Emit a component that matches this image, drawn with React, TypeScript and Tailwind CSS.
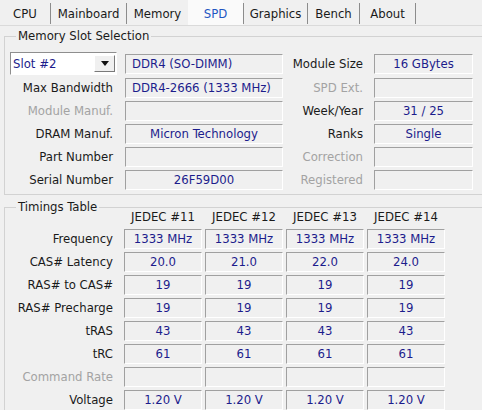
import React from 'react';

const field =
  'h-[20px] leading-[18px] border border-t-[#a0a0a0] border-l-[#a0a0a0] border-r-white border-b-white bg-[#f0f0f0] text-[#1c1c8c] whitespace-nowrap overflow-hidden';

function Field({ value = '', w, align = 'center' }: { value?: string; w: string; align?: 'left' | 'center' }) {
  return (
    <div className={`${field} ${w} ${align === 'left' ? 'text-left pl-[6px]' : 'text-center'}`}>{value}</div>
  );
}

function Label({ text, w, dim }: { text: string; w: string; dim?: boolean }) {
  return (
    <div className={`${w} text-right whitespace-nowrap leading-[20px] ${dim ? 'text-[#a3a3a3]' : 'text-[#1a1a1a]'}`}>{text}</div>
  );
}

const tabs = [
  { name: 'CPU', w: 'w-[50px]', sep: true },
  { name: 'Mainboard', w: 'w-[75px]', sep: true },
  { name: 'Memory', w: 'w-[61px]', sep: false },
  { name: 'SPD', w: 'w-[55px]', sep: true, active: true },
  { name: 'Graphics', w: 'w-[63px]', sep: true },
  { name: 'Bench', w: 'w-[51px]', sep: true },
  { name: 'About', w: 'w-[55px]', sep: true },
];

const slotRows = [
  { l: 'Max Bandwidth', v: 'DDR4-2666 (1333 MHz)', align: 'left' as const, r: 'SPD Ext.', rdim: true, rv: '' },
  { l: 'Module Manuf.', ldim: true, v: '', r: 'Week/Year', rv: '31 / 25' },
  { l: 'DRAM Manuf.', v: 'Micron Technology', r: 'Ranks', rv: 'Single' },
  { l: 'Part Number', v: '', r: 'Correction', rdim: true, rv: '' },
  { l: 'Serial Number', v: '26F59D00', r: 'Registered', rdim: true, rv: '' },
];

const timings = [
  { l: 'Frequency', v: ['1333 MHz', '1333 MHz', '1333 MHz', '1333 MHz'] },
  { l: 'CAS# Latency', v: ['20.0', '21.0', '22.0', '24.0'] },
  { l: 'RAS# to CAS#', v: ['19', '19', '19', '19'] },
  { l: 'RAS# Precharge', v: ['19', '19', '19', '19'] },
  { l: 'tRAS', v: ['43', '43', '43', '43'] },
  { l: 'tRC', v: ['61', '61', '61', '61'] },
  { l: 'Command Rate', dim: true, v: ['', '', '', ''] },
  { l: 'Voltage', v: ['1.20 V', '1.20 V', '1.20 V', '1.20 V'] },
];

export default function App() {
  return (
    <div className="w-[482px] h-[410px] overflow-hidden bg-[#f0f0f0] text-[13px] font-['DejaVu_Sans_Condensed','DejaVu_Sans',sans-serif] text-[#1a1a1a]">
      {/* tab strip */}
      <div className="flex h-[26px] border-b border-[#dadada]">
        {tabs.map((t) => (
          <div key={t.name} className="flex">
            <div
              className={`${t.w} h-[25px] pt-[6px] text-center leading-[16px] ${
                t.active ? 'bg-[#fafafa] text-[#1f56c2]' : ''
              }`}
            >
              {t.name}
            </div>
            {t.sep && <div className="w-px h-[21px] mt-[3px] bg-[#8c8c8c]" />}
          </div>
        ))}
      </div>

      {/* memory slot selection */}
      <fieldset className="ml-[4px] mt-[2px] w-[490px] border border-[#d2d2d2] pl-[5px] pb-[4px]">
        <legend className="ml-[6px] px-[2px] leading-[16px]">Memory Slot Selection</legend>
        <div className="flex flex-col gap-[3px] pt-[8px]">
          <div className="flex items-center">
            <div className="w-[107px] h-[23px] flex items-center bg-white border border-t-[#8e8e8e] border-l-[#8e8e8e] border-r-white border-b-white">
              <div className="flex-1 pl-[2px] leading-[18px] text-[#1c1c8c]">Slot #2</div>
              <div className="w-[21px] h-[17px] mr-[1px] flex items-center justify-center bg-[#f0f0f0] border border-t-white border-l-white border-r-[#7a7a7a] border-b-[#7a7a7a]">
                <svg width="8" height="5" viewBox="0 0 8 5">
                  <path d="M0 0h8L4 5z" fill="#111" />
                </svg>
              </div>
            </div>
            <div className="ml-[8px]">
              <Field value="DDR4 (SO-DIMM)" w="w-[158px]" align="left" />
            </div>
            <Label text="Module Size" w="w-[80px]" />
            <div className="ml-[11px]">
              <Field value="16 GBytes" w="w-[99px]" />
            </div>
          </div>
          {slotRows.map((r) => (
            <div key={r.l} className="flex items-center">
              <Label text={r.l} w="w-[103px]" dim={r.ldim} />
              <div className="ml-[12px]">
                <Field value={r.v} w="w-[158px]" align={r.align ?? 'center'} />
              </div>
              <Label text={r.r} w="w-[80px]" dim={r.rdim} />
              <div className="ml-[11px]">
                <Field value={r.rv} w="w-[99px]" />
              </div>
            </div>
          ))}
        </div>
      </fieldset>

      {/* timings table */}
      <fieldset className="ml-[4px] mt-[4px] w-[490px] border border-[#d2d2d2] pl-[5px] pb-[4px]">
        <legend className="ml-[6px] px-[2px] leading-[16px]">Timings Table</legend>
        <div className="flex -mt-[6px] leading-[16px]">
          <div className="w-[114px]" />
          <div className="flex gap-[3px]">
            {['JEDEC #11', 'JEDEC #12', 'JEDEC #13', 'JEDEC #14'].map((h) => (
              <div key={h} className="w-[78px] text-center whitespace-nowrap">{h}</div>
            ))}
          </div>
        </div>
        <div className="flex flex-col gap-[3px] mt-[4px]">
          {timings.map((r) => (
            <div key={r.l} className="flex items-center">
              <Label text={r.l} w="w-[103px]" dim={r.dim} />
              <div className="ml-[11px] flex gap-[3px]">
                {r.v.map((v, i) => (
                  <Field key={i} value={v} w="w-[78px]" />
                ))}
              </div>
            </div>
          ))}
        </div>
      </fieldset>
    </div>
  );
}
